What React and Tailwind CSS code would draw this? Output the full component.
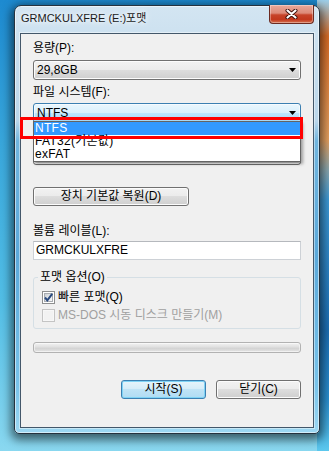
function Arrow() {
  return (
    <svg width="7" height="4" viewBox="0 0 7 4" className="shrink-0">
      <path d="M0 0H7L3.5 4Z" fill="#000" />
    </svg>
  );
}

function Combo({ text, focused }) {
  return (
    <div
      className={`h-[20px] rounded-[3px] border flex items-center justify-between pl-[3px] pr-[4px] ${
        focused
          ? "border-[#3c7fb1] bg-[linear-gradient(180deg,#eaf6fd_0%,#d9f0fc_50%,#bee6fd_50%,#a7d9f5_100%)] shadow-[inset_0_0_0_1px_rgba(255,255,255,0.6)]"
          : "border-[#707070] bg-[linear-gradient(180deg,#f2f2f2_0%,#ebebeb_50%,#dddddd_50%,#cfcfcf_100%)] shadow-[inset_0_0_0_1px_#fcfcfc]"
      }`}
    >
      <span className="leading-[15px]">{text}</span>
      <Arrow />
    </div>
  );
}

function Check({ checked, disabled }) {
  return (
    <div
      className={`w-[13px] h-[13px] shrink-0 border flex items-center justify-center ${
        disabled ? "border-[#c4c4c4] bg-[#f7f7f7]" : "border-[#8e8f8f] bg-white"
      }`}
    >
      <div
        className={`w-[9px] h-[9px] relative ${
          disabled
            ? "bg-[#f2f2f2]"
            : "bg-[linear-gradient(135deg,#c9ced3_0%,#e6e8ea_50%,#f8f8f8_100%)] border border-[#a9adb2]"
        }`}
      >
        {checked && (
          <svg width="11" height="11" viewBox="0 0 11 11" className="absolute left-[-2px] top-[-2px]">
            <path d="M2 5.5L4.3 8.3L9.2 1.8" fill="none" stroke="#2a4a7f" strokeWidth="2" />
          </svg>
        )}
      </div>
    </div>
  );
}

export default function App() {
  return (
    <div className="w-[329px] h-[451px] overflow-hidden pt-[5px] pl-[14px] font-['Liberation_Sans','Noto_Sans_CJK_KR',sans-serif] [background:linear-gradient(180deg,#9ccfea_0px,#d86c26_36px,#e4a060_140px,#8aa8b0_170px,#3d9ad6_200px,#1d6fb4_330px,#2a90d0_400px,#5cc8ee_451px)_right_top/12px_100%_no-repeat,linear-gradient(180deg,#1d8ad0_0px,#3aa8dc_150px,#52bee6_300px,#8ad8f0_451px)]">
      <div className="w-[306px] h-[429px] rounded-t-[7px] rounded-b-[5px] border border-[#25323e] bg-[linear-gradient(180deg,#d3e5f2_0px,#c6dded_60px,#bad6ea_115px,#70b5de_135px,#5ba9da_250px,#78c3ea_380px,#9ed8f2_429px)] shadow-[0_3px_10px_3px_rgba(0,0,0,0.55),inset_0_0_0_1px_rgba(255,255,255,0.55)] flex flex-col px-[5px] pb-[5px]">
        <div className="h-[27px] shrink-0 flex items-start justify-between">
          <span className="pl-[1px] pt-[5px] text-[11px] leading-[14px] text-[#1a1a1a] [text-shadow:0_0_5px_#fff,0_0_8px_#fff]">
            GRMCKULXFRE (E:)포맷
          </span>
          <div className="mt-[-1px] w-[45px] h-[19px] rounded-b-[4px] border border-[#6b2a20] border-t-0 bg-[linear-gradient(180deg,#e9a99a_0%,#dd8a78_45%,#c7442a_55%,#c2381d_80%,#d5704f_100%)] shadow-[inset_0_0_0_1px_rgba(255,255,255,0.35)] flex items-center justify-center">
            <svg width="13" height="10" viewBox="0 0 13 10">
              <path d="M2.5 1.5L10.5 8.5M10.5 1.5L2.5 8.5" stroke="#3a0d08" strokeWidth="4" strokeLinecap="round" />
              <path d="M2.5 1.5L10.5 8.5M10.5 1.5L2.5 8.5" stroke="#ffffff" strokeWidth="2.2" strokeLinecap="round" />
            </svg>
          </div>
        </div>

        <div className="h-[395px] shrink-0 border border-[#43576a] bg-[#f0f0f0] px-[12px] pt-[7px] flex flex-col text-[12px] leading-[15px] text-black shadow-[0_0_0_1px_rgba(255,255,255,0.45)]">
          <div className="h-[15px]">용량(P):</div>
          <div className="mt-[4px]">
            <Combo text="29,8GB" />
          </div>

          <div className="mt-[5px] h-[15px]">파일 시스템(F):</div>
          <div className="mt-[3px] relative">
            <Combo text="NTFS" focused />
            <div className="absolute left-0 right-0 top-[18px] z-10 bg-white border border-[#646464] shadow-[2px_2px_3px_rgba(0,0,0,0.35)] flex flex-col leading-[13px] tracking-[0.3px]">
              <div className="h-[13px] bg-[#3399ff] text-white pl-[1px]">NTFS</div>
              <div className="h-[13px] pl-[1px]">FAT32(기본값)</div>
              <div className="h-[13px] pl-[1px]">exFAT</div>
            </div>
            <div className="absolute left-[-13px] top-[14px] w-[283px] h-[22px] border-[3px] border-[#ff0000] z-20" />
          </div>

          <div className="mt-[4px] h-[15px]" />
          <div className="mt-[3px]">
            <Combo text="" />
          </div>

          <div className="mt-[22px] w-[156px] h-[19px] rounded-[3px] border border-[#707070] bg-[linear-gradient(180deg,#f2f2f2_0%,#ebebeb_50%,#dddddd_50%,#cfcfcf_100%)] shadow-[inset_0_0_0_1px_#fcfcfc] flex items-center justify-center">
            장치 기본값 복원(D)
          </div>

          <div className="mt-[18px] h-[15px]">볼륨 레이블(L):</div>
          <div className="mt-[2px] h-[19px] bg-white border border-[#cdd1d6] border-t-[#b5b8bd] flex items-center pl-[2px]">
            GRMCKULXFRE
          </div>

          <fieldset className="mt-[10px] border border-[#d5dfe5] rounded-[3px] pl-[4px] pr-[4px] pt-[5px] pb-[5px] min-w-0">
            <legend className="px-[2px] h-[15px] leading-[15px]">포맷 옵션(O)</legend>
            <div className="flex flex-col gap-[3px]">
              <div className="ml-[4px] h-[15px] flex items-center gap-[3px]">
                <Check checked />
                <span>빠른 포맷(Q)</span>
              </div>
              <div className="ml-[4px] h-[15px] flex items-center gap-[3px] text-[#a0a0a0]">
                <Check disabled />
                <span>MS-DOS 시동 디스크 만들기(M)</span>
              </div>
            </div>
          </fieldset>

          <div className="mt-[13px] h-[11px] rounded-[3px] border border-[#b2b2b2] bg-[linear-gradient(180deg,#f3f3f3_0%,#e2e2e2_40%,#d4d4d4_60%,#e4e4e4_100%)] shadow-[inset_0_0_0_1px_rgba(255,255,255,0.5)]" />

          <div className="mt-[27px] flex justify-end gap-[10px]">
            <div className="w-[85px] h-[19px] rounded-[3px] border border-[#3c7fb1] bg-[linear-gradient(180deg,#e6f4fb_0%,#d4ecf8_50%,#bfe3f6_50%,#b0dcf3_100%)] shadow-[inset_0_0_0_1px_#7fd3f5] flex items-center justify-center">
              시작(S)
            </div>
            <div className="w-[85px] h-[19px] rounded-[3px] border border-[#707070] bg-[linear-gradient(180deg,#f2f2f2_0%,#ebebeb_50%,#dddddd_50%,#cfcfcf_100%)] shadow-[inset_0_0_0_1px_#fcfcfc] flex items-center justify-center">
              닫기(C)
            </div>
          </div>
        </div>
      </div>
    </div>
  );
}
